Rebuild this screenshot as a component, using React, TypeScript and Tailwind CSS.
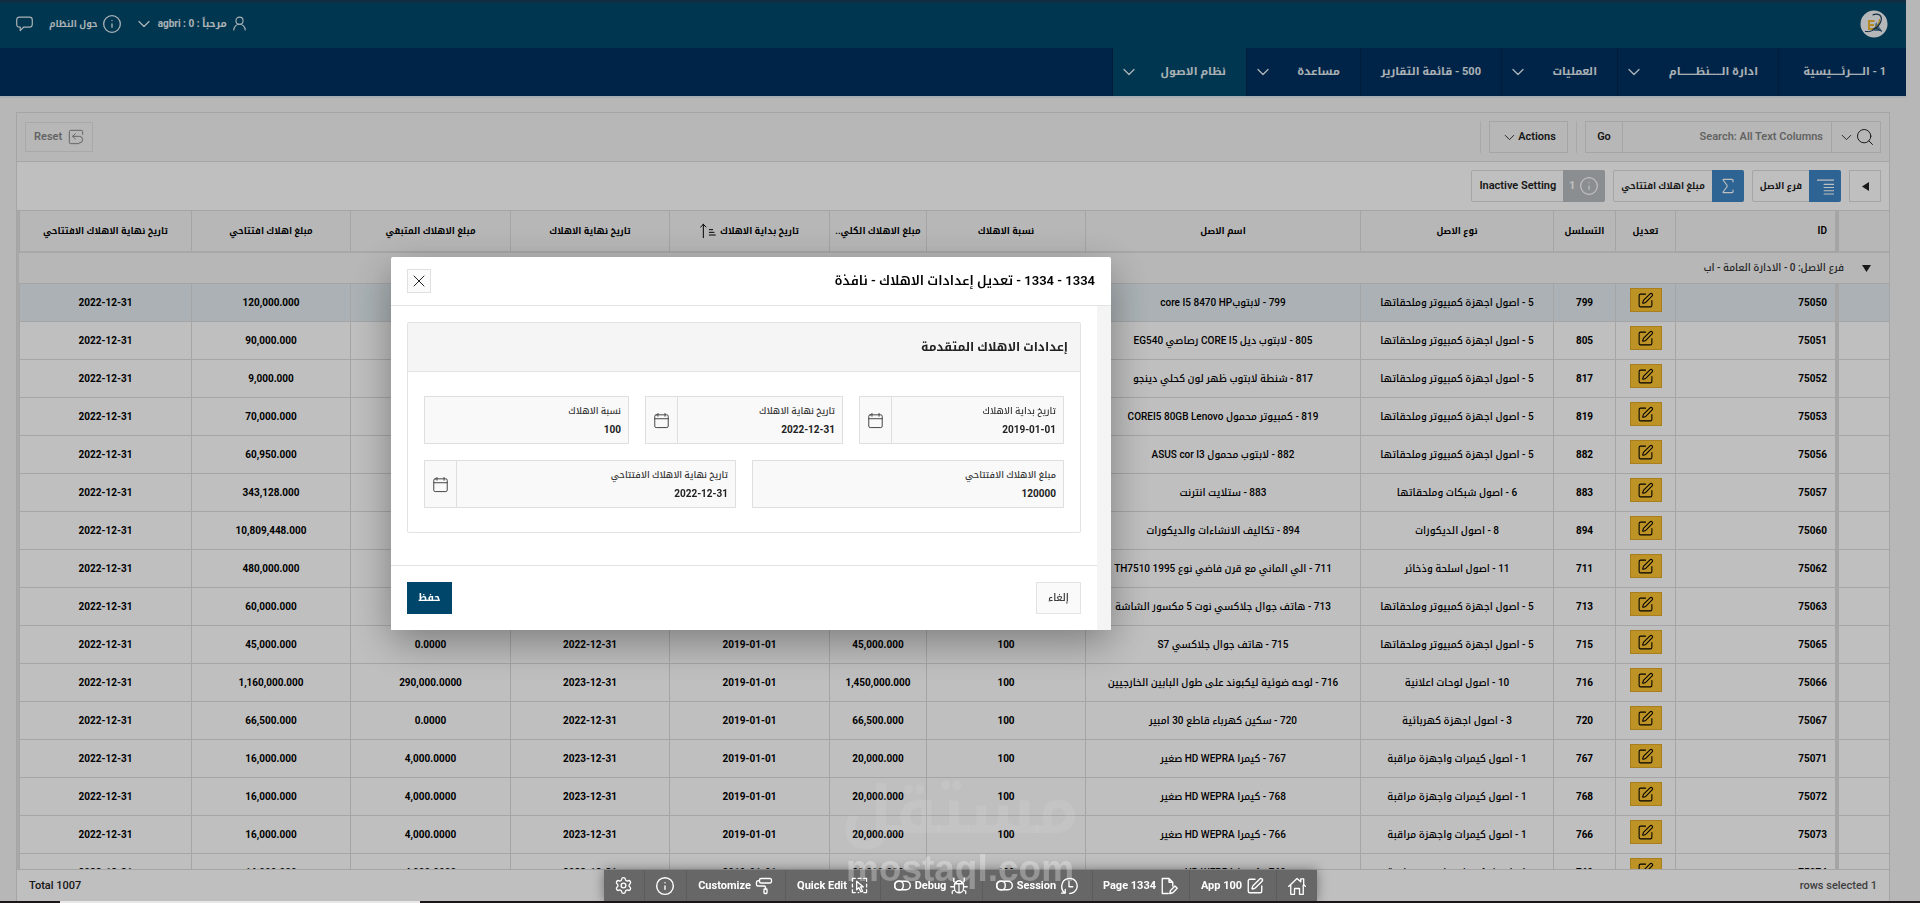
import type { ReactNode } from "react";
import { ChevronDown, Info, PaintRoller, Search, Settings, Sigma, SquarePen, UserRound, X } from "lucide-react";

type Row = {
  id: string;
  seq: string;
  type: string;
  name: string;
  total: string;
  end: string;
  remaining: string;
  opening: string;
};

const computers = "5 - اصول اجهزة كمبيوتر وملحقاتها";
const cameras = "1 - اصول كيمرات واجهزة مراقبة";

const rows: Row[] = [
  { id: "75050", seq: "799", type: computers, name: "799 - لابتوبcore I5 8470 HP", total: "120,000.000", end: "2022-12-31", remaining: "0.0000", opening: "120,000.000" },
  { id: "75051", seq: "805", type: computers, name: "805 - لابتوب ديل CORE I5 رصاصي EG540", total: "90,000.000", end: "2022-12-31", remaining: "0.0000", opening: "90,000.000" },
  { id: "75052", seq: "817", type: computers, name: "817 - شنطة لابتوب ظهر لون كحلي دينجو", total: "9,000.000", end: "2022-12-31", remaining: "0.0000", opening: "9,000.000" },
  { id: "75053", seq: "819", type: computers, name: "819 - كمبيوتر محمول COREI5 80GB Lenovo", total: "70,000.000", end: "2022-12-31", remaining: "0.0000", opening: "70,000.000" },
  { id: "75056", seq: "882", type: computers, name: "882 - لابتوب محمول ASUS cor I3", total: "60,950.000", end: "2022-12-31", remaining: "0.0000", opening: "60,950.000" },
  { id: "75057", seq: "883", type: "6 - اصول شبكات وملحقاتها", name: "883 - ستلايت انترنت", total: "343,128.000", end: "2022-12-31", remaining: "0.0000", opening: "343,128.000" },
  { id: "75060", seq: "894", type: "8 - اصول الديكورات", name: "894 - تكاليف الانشاءات والديكورات", total: "10,809,448.000", end: "2022-12-31", remaining: "0.0000", opening: "10,809,448.000" },
  { id: "75062", seq: "711", type: "11 - اصول اسلحة وذخائر", name: "711 - الي الماني مع قرن فاضي نوع 1995 TH7510", total: "480,000.000", end: "2022-12-31", remaining: "0.0000", opening: "480,000.000" },
  { id: "75063", seq: "713", type: computers, name: "713 - هاتف جوال جلاكسي نوت 5 مكسور الشاشة", total: "60,000.000", end: "2022-12-31", remaining: "0.0000", opening: "60,000.000" },
  { id: "75065", seq: "715", type: computers, name: "715 - هاتف جوال جلاكسي S7", total: "45,000.000", end: "2022-12-31", remaining: "0.0000", opening: "45,000.000" },
  { id: "75066", seq: "716", type: "10 - اصول لوحات اعلانية", name: "716 - لوحه ضوئية ليكبوند على طول البابين الخارجيين", total: "1,450,000.000", end: "2023-12-31", remaining: "290,000.0000", opening: "1,160,000.000" },
  { id: "75067", seq: "720", type: "3 - اصول اجهزة كهربائية", name: "720 - سكين كهرباء قاطع 30 امبير", total: "66,500.000", end: "2022-12-31", remaining: "0.0000", opening: "66,500.000" },
  { id: "75071", seq: "767", type: cameras, name: "767 - كيمرا HD WEPRA صغير", total: "20,000.000", end: "2023-12-31", remaining: "4,000.0000", opening: "16,000.000" },
  { id: "75072", seq: "768", type: cameras, name: "768 - كيمرا HD WEPRA صغير", total: "20,000.000", end: "2023-12-31", remaining: "4,000.0000", opening: "16,000.000" },
  { id: "75073", seq: "766", type: cameras, name: "766 - كيمرا HD WEPRA صغير", total: "20,000.000", end: "2023-12-31", remaining: "4,000.0000", opening: "16,000.000" },
  { id: "75074", seq: "769", type: cameras, name: "769 - كيمرا HD WEPRA صغير", total: "20,000.000", end: "2023-12-31", remaining: "4,000.0000", opening: "16,000.000" },
];

function Icon({ size = 16, stroke = 1.5, className, children }: { size?: number; stroke?: number; className?: string; children: ReactNode }) {
  return (
    <svg width={size} height={size} viewBox="0 0 24 24" fill="none" stroke="currentColor" strokeWidth={stroke} strokeLinecap="round" strokeLinejoin="round" className={className} aria-hidden="true">
      {children}
    </svg>
  );
}

const CalendarIcon = () => (
  <Icon size={17} stroke={1.4}>
    <rect x="2.5" y="4" width="19" height="18" rx="2" />
    <path d="M2.5 9.500h19M7 2v4M17 2v4" />
  </Icon>
);

const ToggleIcon = () => (
  <Icon size={17} stroke={2}>
    <rect x="1" y="6" width="22" height="12" rx="6" />
    <rect x="1" y="6" width="12" height="12" rx="5" />
  </Icon>
);

function Logo() {
  return (
    <svg width="28" height="28" viewBox="0 0 28 28" aria-hidden="true">
      <circle cx="14" cy="14" r="13.5" fill="#f2f5f6" />
      <path d="M16 12l6 9h-8z" fill="#5488a8" />
      <path d="M14.500 11H9v8h5.500M9 15h5" fill="none" stroke="#f0b62f" strokeWidth="2" />
      <path d="M14 18c4-2 6-5.500 5.500-9-.5 5-3 8.500-7 10" fill="#f0b62f" stroke="#e5a82a" strokeWidth=".8" />
      <path d="M12.500 5c6-2.500 10 .5 8.500 6-1.300 4-4.500 7-8.500 8.500" fill="none" stroke="#1b3c58" strokeWidth="1.200" />
      <path d="M5 21.500c4.500 .5 8-.5 11-3.500l6 3.500" fill="none" stroke="#1b3c58" strokeWidth="1" />
    </svg>
  );
}

const navItems = [
  { label: "1 - الــــــرئـــــيسية", width: "w-[128px]", arrow: false, active: false },
  { label: "ادارة الــــــنظــــــــام", width: "w-[161px]", arrow: true, active: false },
  { label: "العمليات", width: "w-[116px]", arrow: true, active: false },
  { label: "500 - قائمة التقارير", width: "w-[141px]", arrow: false, active: false },
  { label: "مساعدة", width: "w-[114px]", arrow: true, active: false },
  { label: "نظام الاصول", width: "w-[134px]", arrow: true, active: true },
];

function Header() {
  return (
    <header className="font-bold text-[#e4edf2]">
      <div className="flex h-12 items-center justify-between border-t-[3px] border-[#143c5a] bg-[#00486b] pr-[18px] pb-1 pl-4">
        <a href="#" aria-label="الرئيسية">
          <Logo />
        </a>
        <div className="flex items-center text-[10px]">
          <button className="flex items-center gap-1">
            <UserRound size={17} strokeWidth={1.6} />
            مرحباً : 0 : agbri
            <ChevronDown size={20} strokeWidth={1.5} />
          </button>
          <button className="mr-3 flex items-center gap-1 text-[9px]">
            <Info size={20} strokeWidth={1.6} />
            حول النظام
          </button>
          <button className="mr-4" aria-label="تعليق">
            <Icon size={17} stroke={1.7}>
              <path d="M5 3h14q4 0 4 4v6q0 4-4 4h-8l-5 5v-5H5q-4 0-4-4V7q0-4 4-4z" />
            </Icon>
          </button>
        </div>
      </div>
      <nav className="flex h-12 bg-[#003060]">
        {navItems.map((item) => (
          <a
            key={item.label}
            href="#"
            className={`flex items-center justify-between border-l border-[#00284c] pr-5 pl-1.5 text-[11px] whitespace-nowrap ${item.width} ${
              item.active ? "bg-[#00486b]" : ""
            }`}
          >
            {item.label}
            {item.arrow && <ChevronDown size={20} strokeWidth={1.6} />}
          </a>
        ))}
      </nav>
    </header>
  );
}

function Chip({ icon, label, muted }: { icon: ReactNode; label: string; muted?: boolean }) {
  return (
    <div className="flex h-8 items-center rounded-xs border border-[#dcdcdc]">
      <span className={`-my-px -mr-px flex h-8 items-center justify-center gap-1 rounded-r-xs text-white ${muted ? "w-[42px] bg-[#b9bec2]" : "w-8 bg-[#3e86c4]"}`}>{icon}</span>
      <button className={`px-[7px] ${muted ? "text-[11px] font-semibold" : "text-[9px] font-bold"}`}>{label}</button>
    </div>
  );
}

function Toolbar() {
  return (
    <>
      <div className="flex h-[49px] items-center border-b border-[#dcdcdc] bg-[#f5f5f5] px-2 font-semibold">
        <div className="flex h-8 w-[296px] border border-[#dcdcdc]">
          <button className="flex w-12 items-center justify-center" aria-label="بحث">
            <Search size={20} strokeWidth={1.2} />
            <ChevronDown size={17} strokeWidth={1.3} />
          </button>
          <input aria-label="Search" placeholder="Search: All Text Columns" className="min-w-0 flex-1 border-x border-[#dcdcdc] px-2 placeholder:text-[#858585]" />
          <button className="w-9">Go</button>
        </div>
        <span className="mx-2 h-8 w-px bg-[#e2e2e2]" />
        <button className="flex h-8 w-[79px] items-center justify-center border border-[#dcdcdc]">
          Actions
          <ChevronDown size={17} strokeWidth={1.3} />
        </button>
        <span className="mx-2 h-8 w-px bg-[#e2e2e2]" />
        <button className="mr-auto flex h-[30px] items-center gap-1.5 border border-[#e2e2e2] px-2 text-[#858585]">
          <Icon size={16} stroke={1.5}>
            <path d="M22 8V4a2 2 0 0 0-2-2H4a2 2 0 0 0-2 2v16a2 2 0 0 0 2 2h12" />
            <path d="M11 7l-4 4 4 4M7 11h10a5 5 0 0 1 0 10" />
          </Icon>
          Reset
        </button>
      </div>
      <div className="flex h-[49px] items-center gap-2 border-b border-[#dcdcdc] bg-white px-2">
        <button className="flex h-8 w-8 items-center justify-center border border-[#dcdcdc]" aria-label="توسيع">
          <svg width="7" height="9" viewBox="0 0 7 9" aria-hidden="true">
            <path d="M7 0v9L0 4.500z" fill="#222" />
          </svg>
        </button>
        <Chip
          label="فرع الاصل"
          icon={
            <Icon size={17} stroke={1.5}>
              <path d="M0 3h24M10 9h14M10 13.500h14M10 18h14M10 22.500h14" />
            </Icon>
          }
        />
        <Chip label="مبلغ اهلاك افتتاحي" icon={<Sigma size={20} strokeWidth={1.4} />} />
        <Chip
          muted
          label="Inactive Setting"
          icon={
            <>
              <Info size={20} strokeWidth={1.5} />
              <span className="text-[11px] font-bold">1</span>
            </>
          }
        />
      </div>
    </>
  );
}

function Grid() {
  const head = "h-[42px] border-b-2 border-l border-b-[#e0e0e0] border-l-[#dcdcdc] bg-[#f5f5f5] whitespace-nowrap text-[9px] font-bold";
  const cell = "h-[38px] border-b border-l border-[#dcdcdc] text-center";
  const text = `${cell} font-medium whitespace-nowrap`;
  return (
    <div className="min-h-0 flex-1 overflow-hidden border-l-2 border-[#e0e0e0]">
      <table className="w-full table-fixed border-separate border-spacing-0 text-[10px] font-bold text-black">
        <colgroup>
          <col className="w-[51px]" />
          <col className="w-[163px]" />
          <col className="w-[60px]" />
          <col className="w-[62px]" />
          <col className="w-[193px]" />
          <col />
          <col className="w-[159px]" />
          <col className="w-[97px]" />
          <col className="w-[160px]" />
          <col className="w-[159px]" />
          <col className="w-[160px]" />
          <col className="w-[159px]" />
          <col className="w-[172px]" />
        </colgroup>
        <thead>
          <tr>
            <th className={head} />
            <th className="h-[42px] border-r-[3px] border-b-2 border-l border-[#dcdcdc] bg-[#f5f5f5] pr-2 text-right font-semibold">ID</th>
            <th className={head}>تعديل</th>
            <th className={head}>التسلسل</th>
            <th className={head}>نوع الاصل</th>
            <th className={head}>اسم الاصل</th>
            <th className={head}>نسبة الاهلاك</th>
            <th className={head}>مبلغ الاهلاك الكلي..</th>
            <th className={head}>
              <span className="flex items-center justify-center gap-1">
                تاريخ بداية الاهلاك
                <Icon size={16} stroke={1.5}>
                  <path d="M5 22V2M1 6l4-4 4 4M14 10h5M14 14h7M14 18h9" />
                </Icon>
              </span>
            </th>
            <th className={head}>تاريخ نهاية الاهلاك</th>
            <th className={head}>مبلغ الاهلاك المتبقي</th>
            <th className={head}>مبلغ اهلاك افتتاحي</th>
            <th className={head}>تاريخ نهاية الاهلاك الافتتاحي</th>
          </tr>
        </thead>
        <tbody>
          <tr>
            <td colSpan={13} className="h-[31px] border-b border-[#dcdcdc] bg-[#f5f5f5] px-[18px] font-medium text-[#333]">
              <button className="flex items-center gap-[18px]">
                <svg width="9" height="7" viewBox="0 0 9 7" aria-hidden="true">
                  <path d="M0 0h9L4.500 7z" fill="#222" />
                </svg>
                فرع الاصل: 0 - الادارة العامة - اب
              </button>
            </td>
          </tr>
          {rows.map((row, i) => (
            <tr key={row.id} className={i === 0 ? "bg-[#e4edf1]" : "bg-white"}>
              <td className={cell} />
              <td className="h-[38px] border-r-[3px] border-b border-l border-[#dcdcdc] pr-2 text-right">{row.id}</td>
              <td className={`${cell} align-top`}>
                <button className="mt-1 inline-flex h-6 w-8 items-center justify-center border border-[#e0a92a] bg-[#fcc433]" aria-label={`تعديل ${row.seq}`}>
                  <SquarePen size={17} strokeWidth={1.5} />
                </button>
              </td>
              <td className={cell}>{row.seq}</td>
              <td className={text}>{row.type}</td>
              <td className={text}>{row.name}</td>
              <td className={cell}>100</td>
              <td className={cell}>{row.total}</td>
              <td className={cell}>2019-01-01</td>
              <td className={cell}>{row.end}</td>
              <td className={cell}>{row.remaining}</td>
              <td className={cell}>{row.opening}</td>
              <td className={cell}>2022-12-31</td>
            </tr>
          ))}
        </tbody>
      </table>
    </div>
  );
}

function Field({ id, label, value, date }: { id: string; label: string; value: string; date?: boolean }) {
  return (
    <div className="flex h-12 border border-[#dfdfdf] bg-[#f9f9f9]">
      <div className="flex min-w-0 flex-1 flex-col px-[7px] pt-1.5">
        <label htmlFor={id} className="text-[9px] leading-4 font-medium text-[#333]">
          {label}
        </label>
        <input id={id} defaultValue={value} className="h-5 w-full text-[10px] font-bold text-[#222] outline-none" />
      </div>
      {date && (
        <button className="flex w-8 items-center justify-center border-r border-[#dfdfdf] text-[#444]" aria-label={`اختيار ${label}`}>
          <CalendarIcon />
        </button>
      )}
    </div>
  );
}

function Dialog() {
  return (
    <div className="fixed inset-0 z-10 flex items-start bg-black/25 pt-[257px] pl-[391px]" dir="ltr">
      <section dir="rtl" role="dialog" aria-labelledby="dialog-title" className="w-[720px] rounded-t-xs bg-white shadow-[0_12px_40px_rgba(0,0,0,0.35)]">
        <div className="flex h-[49px] items-center justify-between border-b border-[#e3e3e3] px-4">
          <h1 id="dialog-title" className="text-[13px] font-semibold text-black">
            1334 - 1334 - تعديل إعدادات الاهلاك - نافذة
          </h1>
          <button className="flex h-6 w-6 items-center justify-center border border-[#e0e0e0] bg-[#fafafa]" aria-label="إغلاق">
            <X size={20} strokeWidth={1.2} />
          </button>
        </div>
        <div className="border-r-[14px] border-[#f4f4f4]">
          <div className="px-4 pt-4 pb-8">
            <div className="rounded-xs border border-[#e3e3e3]">
              <h2 className="flex h-[49px] items-center border-b border-[#e3e3e3] bg-[#f5f5f5] px-3 text-[12px] font-bold text-[#222]">إعدادات الاهلاك المتقدمة</h2>
              <div className="flex flex-col gap-4 px-4 py-6">
                <div className="grid grid-cols-[205fr_198fr_205fr] gap-4">
                  <Field id="start" label="تاريخ بداية الاهلاك" value="2019-01-01" date />
                  <Field id="end" label="تاريخ نهاية الاهلاك" value="2022-12-31" date />
                  <Field id="rate" label="نسبة الاهلاك" value="100" />
                </div>
                <div className="grid grid-cols-2 gap-4">
                  <Field id="amount" label="مبلغ الاهلاك الافتتاحي" value="120000" />
                  <Field id="opening-end" label="تاريخ نهاية الاهلاك الافتتاحي" value="2022-12-31" date />
                </div>
              </div>
            </div>
          </div>
          <div className="flex items-center justify-between border-t border-[#e3e3e3] p-4 text-[10px]">
            <button className="h-8 w-[45px] border border-[#e3e3e3] bg-[#fafafa] font-medium text-[#333]">إلغاء</button>
            <button className="h-8 w-[45px] bg-[#00466a] font-bold text-white">حفظ</button>
          </div>
        </div>
      </section>
    </div>
  );
}

function DevToolbar() {
  const item = "flex items-center justify-center gap-1 border-l border-[#5c5c5c]";
  return (
    <div className="fixed inset-x-0 bottom-0 z-20">
      <div className="mx-auto flex h-[31px] w-[713px] bg-[#676767] text-[11px] font-bold text-white shadow-[0_0_12px_rgba(0,0,0,0.4)]">
        <button className={`${item} w-[41px]`} aria-label="Home">
          <Icon size={20} stroke={1.6}>
            <path d="M2 12.500L12 3l4.500 4V3.500H20v6.500l2 2.500M4.500 11v11H9v-7h6v7h4.500V11" />
          </Icon>
        </button>
        <button className={`${item} w-[87px]`}>
          <SquarePen size={18} strokeWidth={1.8} />
          App 100
        </button>
        <button className={`${item} w-[97px]`}>
          <Icon size={18} stroke={1.8}>
            <path d="M11 22H3V2h9l5 5v5M12 2v5h5M13 22l1-4 6-6 3 3-6 6z" />
          </Icon>
          Page 1334
        </button>
        <button className={`${item} w-[110px]`}>
          <Icon size={18} stroke={1.8}>
            <path d="M12 6v7h5M6.500 21.500C0 17 1 4 10.500 2.200S25 9 22 16c-2 4-5 6-9 6M2 21.500h5v-5" />
          </Icon>
          Session
          <ToggleIcon />
        </button>
        <button className={`${item} w-[102px]`}>
          <Icon size={18} stroke={1.7}>
            <path d="M6 9h12v6a6 6 0 0 1-12 0zM8 9a4 4 0 0 1 8 0M12 9v12M5 1.500V6l3 1.500M19 1.500V6l-3 1.500M1 13h5M18 13h5M3 22v-3l3.500-2M21 22v-3l-3.500-2" />
          </Icon>
          Debug
          <ToggleIcon />
        </button>
        <button className={`${item} w-[95px]`}>
          <Icon size={17} stroke={1.8}>
            <path d="M2 6V2h4M10 2h4M18 2h4v4M22 10v4M22 18v4h-4M6 22H2v-4M2 14v-4M10 22h1M8 6v12l3-3 3 6 2.500-1-3-6h4z" />
          </Icon>
          Quick Edit
        </button>
        <button className={`${item} w-[99px]`}>
          <PaintRoller size={18} strokeWidth={1.8} className="-scale-x-100" />
          Customize
        </button>
        <button className={`${item} w-[42px]`} aria-label="Info">
          <Info size={20} strokeWidth={1.7} />
        </button>
        <button className="flex w-10 items-center justify-center" aria-label="Settings">
          <Settings size={19} strokeWidth={1.7} />
        </button>
      </div>
      <div className="h-0.5 bg-[#1c1517]" dir="ltr">
        <div className="ml-[60px] h-full w-[360px] bg-[#e8e8e8]" />
      </div>
    </div>
  );
}

function Watermark() {
  return (
    <div className="pointer-events-none fixed inset-x-0 bottom-4 z-30 flex flex-col items-center font-bold" aria-hidden="true">
      <span className="text-[66px] leading-[80px] text-white/8">مستقل</span>
      <span className="font-['Liberation_Sans'] text-[37px] leading-9 text-white/30">mostaql.com</span>
    </div>
  );
}

export default function App() {
  return (
    <div dir="rtl" className="flex h-screen flex-col overflow-hidden bg-[#f5f5f5] font-[Roboto,'Noto_Kufi_Arabic',sans-serif] text-[11px] leading-4 text-[#222]">
      <div className="mr-[14px] flex min-h-0 flex-1 flex-col">
        <Header />
        <main className="flex min-h-0 flex-1 flex-col border-t-2 border-[#dfe8ef] px-4 pt-[14px] pb-0.5">
          <div className="flex min-h-0 flex-1 flex-col border-x border-t border-[#dcdcdc]">
            <Toolbar />
            <Grid />
            <div className="flex h-8 items-center justify-between border-t border-[#dcdcdc] bg-white px-3 font-medium">
              <span className="text-[#555]">1 rows selected</span>
              <span>Total 1007</span>
            </div>
          </div>
        </main>
      </div>
      <Dialog />
      <DevToolbar />
      <Watermark />
    </div>
  );
}
